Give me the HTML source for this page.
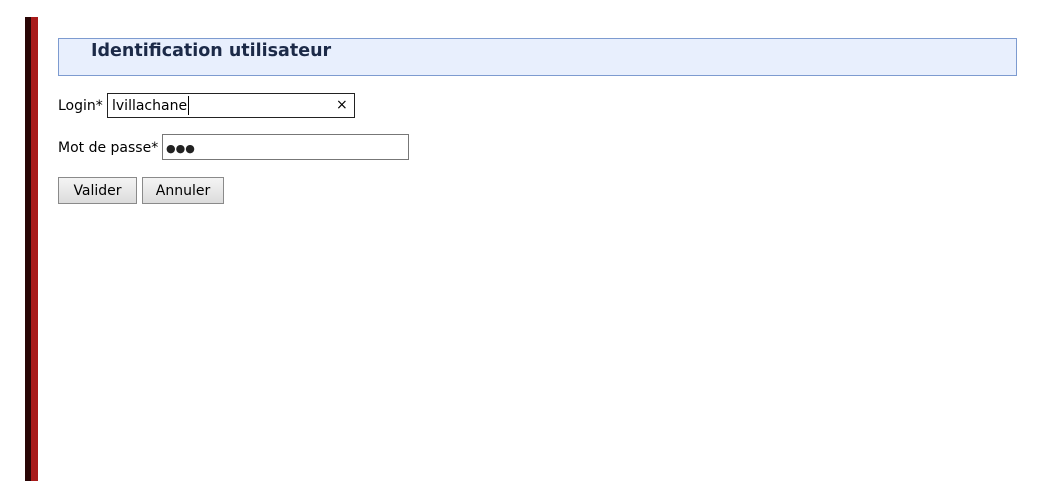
<!DOCTYPE html>
<html><head><style>
body{margin:0;width:1037px;height:481px;background:#fff;position:relative;font-family:"DejaVu Sans",Verdana,sans-serif;font-size:14px;color:#000;overflow:hidden}
.a{position:absolute}
.inp{position:absolute;box-sizing:border-box;background:#fff}
.btn{position:absolute;box-sizing:border-box;border:1px solid #8a8a8a;background:linear-gradient(#f4f4f4,#dcdcdc);font-size:14px;text-align:center;line-height:26px}
</style></head><body>
<div class="a" style="left:25px;top:17px;width:6px;height:464px;background:#2a0606"></div>
<div class="a" style="left:31px;top:17px;width:7px;height:464px;background:#a81a1a"></div>
<div class="a" style="left:58px;top:38px;width:959px;height:38px;box-sizing:border-box;border:1px solid #7d9bd0;background:#e8effd"></div>
<div class="a" style="left:91px;top:40px;font-size:17.5px;font-weight:bold;color:#1c2a48;line-height:22px">Identification utilisateur</div>
<div class="a" style="left:58px;top:97px;line-height:18px">Login*</div>
<div class="inp" style="left:107px;top:93px;width:248px;height:25px;border:1px solid #222"></div>
<div class="a" style="left:112px;top:97px;line-height:18px">lvillachane</div>
<div class="a" style="left:188px;top:96px;width:1px;height:19px;background:#000"></div>
<div class="a" style="left:336px;top:97px;line-height:17px;font-size:14px">×</div>
<div class="a" style="left:58px;top:139px;line-height:18px">Mot de passe*</div>
<div class="inp" style="left:162px;top:134px;width:247px;height:26px;border:1px solid #777"></div>
<div class="a" style="left:166px;top:140px;line-height:17px;font-size:11px;color:#222">●●●</div>
<div class="btn" style="left:58px;top:177px;width:79px;height:27px">Valider</div>
<div class="btn" style="left:142px;top:177px;width:82px;height:27px">Annuler</div>
</body></html>
